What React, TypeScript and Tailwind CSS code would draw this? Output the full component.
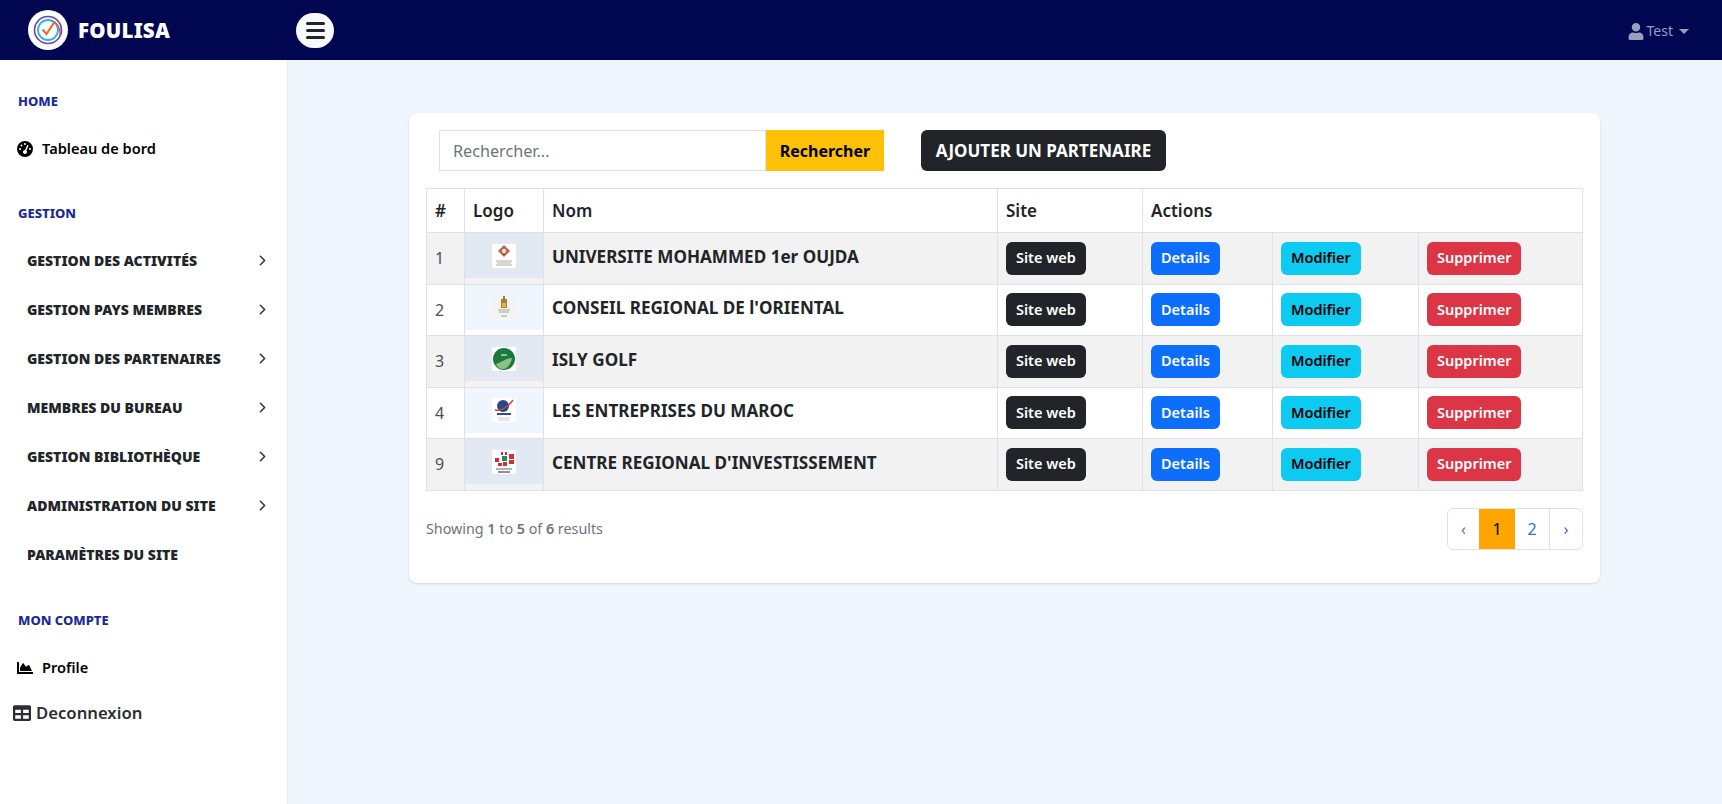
import { ChevronRight } from "lucide-react";
import { FaChartArea, FaTable, FaUser } from "react-icons/fa";
import { FaGaugeHigh } from "react-icons/fa6";

const menu = [
  { label: "GESTION DES ACTIVITÉS", arrow: true },
  { label: "GESTION PAYS MEMBRES", arrow: true },
  { label: "GESTION DES PARTENAIRES", arrow: true },
  { label: "MEMBRES DU BUREAU", arrow: true },
  { label: "GESTION BIBLIOTHÈQUE", arrow: true },
  { label: "ADMINISTRATION DU SITE", arrow: true },
  { label: "PARAMÈTRES DU SITE", arrow: false },
];

function BrandLogo() {
  return (
    <svg viewBox="0 0 40 40" className="w-10 h-10">
      <circle cx="20" cy="20" r="20" fill="#fff" />
      <circle cx="20" cy="20" r="13.5" fill="none" stroke="#6a3fb5" strokeWidth="1.6" />
      <circle cx="20" cy="20" r="10" fill="none" stroke="#27b6e6" strokeWidth="1.8" />
      <path d="M14.5 19.5l4 4.5 8-12" fill="none" stroke="#ee6a2c" strokeWidth="2.2" />
      <path d="M26.5 11.5c4 4 7 9 5 15" fill="none" stroke="#e2553d" strokeWidth="1.4" />
    </svg>
  );
}

// petits logos des partenaires
function PartnerLogo({ id }: { id: number }) {
  if (id === 1)
    return (
      <svg viewBox="0 0 24 24" className="w-6 h-6 bg-white">
        <path d="M12 1l6 6-6 6-6-6z" fill="#b5654d" />
        <circle cx="12" cy="7" r="2.2" fill="#f1ddd0" />
        <path d="M4 17h16M5 19h14M4 21h16" stroke="#a9a29c" strokeWidth="0.9" />
      </svg>
    );
  if (id === 2)
    return (
      <svg viewBox="0 0 24 24" className="w-6 h-6 bg-[#f3f3f1]">
        <path d="M9 4h6v9H9z" fill="#a8842f" />
        <path d="M11 1h2v4h-2z" fill="#7d8a3a" />
        <path d="M10 8h4v4h-4z" fill="#d9b84a" />
        <path d="M6 15h12M7 17h10M9 21h6" stroke="#9a9a92" strokeWidth="0.9" />
      </svg>
    );
  if (id === 3)
    return (
      <svg viewBox="0 0 24 24" className="w-6 h-6 bg-white">
        <circle cx="12" cy="12" r="11" fill="#1c7a3c" />
        <path d="M4 17c5-1 8-5 16-6-1 6-5 11-9 11-3 0-6-2-7-5z" fill="#8cc08a" />
        <path d="M9 8h6" stroke="#e4f0e2" strokeWidth="1.2" />
      </svg>
    );
  if (id === 4)
    return (
      <svg viewBox="0 0 24 24" className="w-6 h-6 bg-white">
        <circle cx="11" cy="8" r="6" fill="#274a86" />
        <path d="M3 12c6 1 12-2 18-10" fill="none" stroke="#c8433a" strokeWidth="1.4" />
        <path d="M5 16h14" stroke="#2d4e86" strokeWidth="2" />
        <path d="M6 20h12M7 22h10" stroke="#b8bcc4" strokeWidth="0.8" />
      </svg>
    );
  return (
    <svg viewBox="0 0 24 24" className="w-6 h-6 bg-white">
      <path d="M3 8h4v4H3zM9 2h2v3H9zM13 2h2v3h-2zM17 4h5v5h-5zM17 10h5v4h-5zM6 13h4v3H6z" fill="#d62b3c" />
      <path d="M10 6h5v5h-5z" fill="#2a8a4a" />
      <path d="M11 12h4v4h-4z" fill="#d62b3c" />
      <path d="M4 19h16" stroke="#666" strokeWidth="1" />
      <path d="M6 22h12" stroke="#222" strokeWidth="1" />
    </svg>
  );
}

const rows = [
  { n: 1, nom: "UNIVERSITE MOHAMMED 1er OUJDA" },
  { n: 2, nom: "CONSEIL REGIONAL DE l'ORIENTAL" },
  { n: 3, nom: "ISLY GOLF" },
  { n: 4, nom: "LES ENTREPRISES DU MAROC" },
  { n: 9, nom: "CENTRE REGIONAL D'INVESTISSEMENT" },
];

export default function App() {
  return (
    <div className="min-h-[804px] h-[804px] overflow-hidden flex flex-col bg-[#eff6fe] font-['Noto_Sans',sans-serif] text-[#212529]">
      {/* navbar */}
      <header className="h-[60px] shrink-0 bg-[#000650] flex items-center">
        <div className="w-[296px] pl-7 flex items-center gap-[10px]">
          <BrandLogo />
          <span className="text-white text-[20.5px] font-black tracking-[0.2px]">FOULISA</span>
        </div>
        <button className="w-[38px] h-[35px] rounded-full bg-[#f8f9fa] flex flex-col items-center justify-center gap-[4px]">
          <span className="w-[19px] h-[3px] bg-[#212529] rounded-sm" />
          <span className="w-[19px] h-[3px] bg-[#212529] rounded-sm" />
          <span className="w-[19px] h-[3px] bg-[#212529] rounded-sm" />
        </button>
        <div className="ml-auto mr-[33px] mt-[2px] flex items-center text-[#9b9dbd] text-sm">
          <FaUser className="w-4 h-[17px] mr-[3px]" />
          <span>Test</span>
          <span className="ml-[6px] w-0 h-0 border-x-[5px] border-x-transparent border-t-[5px] border-t-[#9b9dbd]" />
        </div>
      </header>

      <div className="flex flex-1 min-h-0">
        {/* sidebar */}
        <aside className="w-[288px] shrink-0 bg-white border-r border-[#e6edf6] pt-[30px]">
          <div className="h-6 pl-[18px] flex items-center text-[13px] font-extrabold text-[#1b2a9a]">HOME</div>
          <div className="mt-[11px] h-12 pl-[17px] flex items-center text-black text-[14.6px] font-semibold">
            <FaGaugeHigh className="w-4 h-4 mr-[9px]" />
            Tableau de bord
          </div>
          <div className="mt-[29px] h-6 pl-[18px] flex items-center text-[13px] font-extrabold text-[#1b2a9a]">GESTION</div>
          <ul className="mt-[10px]">
            {menu.map((item) => (
              <li key={item.label} className="h-[49px] pl-[27px] pr-[16px] flex items-center justify-between text-[14px] font-black text-[#212529]">
                <span>{item.label}</span>
                {item.arrow && <ChevronRight className="w-[17px] h-[17px] text-[#333]" strokeWidth={2.2} />}
              </li>
            ))}
          </ul>
          <div className="mt-[30px] h-6 pl-[18px] flex items-center text-[13px] font-extrabold text-[#1b2a9a]">MON COMPTE</div>
          <div className="mt-[11px] h-12 pl-[17px] flex items-center text-black text-[14.6px] font-semibold">
            <FaChartArea className="w-4 h-4 mr-[9px]" />
            Profile
          </div>
          <div className="h-[42px] pl-[13px] flex items-center text-[16.7px] font-semibold text-[#2b2f33]">
            <FaTable className="w-[18px] h-[18px] mr-[5px]" />
            Deconnexion
          </div>
        </aside>

        {/* contenu */}
        <main className="flex-1 pl-[121px] pr-[122px] pt-[53px]">
          <section className="h-[470px] bg-white rounded-lg shadow-sm px-[17px] pt-[17px]">
            <div className="flex items-center pl-[13px] h-[41px]">
              <div className="flex h-[41px] w-[445px]">
                <input
                  readOnly
                  placeholder="Rechercher..."
                  className="w-[327px] h-full border border-[#dee2e6] pl-[13px] text-[16.2px] placeholder:text-[#6c757d] bg-white outline-none"
                />
                <button className="flex-1 bg-[#ffc107] text-black font-bold text-[16px]">Rechercher</button>
              </div>
              <button className="ml-[37px] h-[41px] w-[245px] bg-[#212529] text-white font-bold text-[17px] rounded-md">
                AJOUTER UN PARTENAIRE
              </button>
            </div>

            <table className="mt-[17px] w-[1156px] table-fixed border-collapse border border-[#dee2e6] text-[16px]">
              <colgroup>
                <col className="w-[38px]" />
                <col className="w-[79px]" />
                <col className="w-[454px]" />
                <col className="w-[145px]" />
                <col className="w-[130px]" />
                <col className="w-[146px]" />
                <col className="w-[164px]" />
              </colgroup>
              <thead>
                <tr className="h-[44px] text-left text-[17px]">
                  <th className="border border-[#dee2e6] px-2 font-semibold">#</th>
                  <th className="border border-[#dee2e6] px-2 font-semibold">Logo</th>
                  <th className="border border-[#dee2e6] px-2 font-semibold">Nom</th>
                  <th className="border border-[#dee2e6] px-2 font-semibold">Site</th>
                  <th colSpan={3} className="border border-[#dee2e6] px-2 font-semibold">Actions</th>
                </tr>
              </thead>
              <tbody>
                {rows.map((r, i) => (
                  <tr key={r.n} className={i % 2 === 0 ? "h-[51.5px] bg-[#f2f2f2]" : "h-[51.5px] bg-white"}>
                    <td className="border border-[#dee2e6] px-2 text-[#495057]">{r.n}</td>
                    <td className="border border-[#dee2e6] p-0 align-top">
                      <div className={i % 2 === 0 ? "h-[45px] bg-[#e2e9f2] flex items-center justify-center" : "h-[45px] bg-[#eff6fe] flex items-center justify-center"}>
                        <PartnerLogo id={r.n} />
                      </div>
                    </td>
                    <td className="border border-[#dee2e6] px-2 font-bold text-[17.1px] pb-[3px]">{r.nom}</td>
                    <td className="border border-[#dee2e6] px-2">
                      <span className="inline-flex items-center h-[33px] px-[10px] rounded-md bg-[#212529] text-white text-[14.5px] font-semibold">Site web</span>
                    </td>
                    <td className="border border-[#dee2e6] px-2">
                      <span className="inline-flex items-center h-[33px] px-[10px] rounded-md bg-[#0d6efd] text-white text-[14.5px] font-semibold">Details</span>
                    </td>
                    <td className="border border-[#dee2e6] px-2">
                      <span className="inline-flex items-center h-[33px] px-[10px] rounded-md bg-[#0dcaf0] text-black text-[14.5px] font-semibold">Modifier</span>
                    </td>
                    <td className="border border-[#dee2e6] px-2">
                      <span className="inline-flex items-center h-[33px] px-[10px] rounded-md bg-[#dc3545] text-white text-[14.5px] font-semibold">Supprimer</span>
                    </td>
                  </tr>
                ))}
              </tbody>
            </table>

            <div className="mt-[17px] flex items-center justify-between">
              <p className="text-[14.3px] text-[#6c757d]">
                Showing <span className="font-semibold">1</span> to <span className="font-semibold">5</span> of <span className="font-semibold">6</span> results
              </p>
              <div className="flex h-[42px] w-[136px] border border-[#dee2e6] rounded-md text-[16px] overflow-hidden">
                <span className="w-[31px] flex items-center justify-center text-[#6c757d]">‹</span>
                <span className="w-[36px] -my-px bg-[#ffa500] flex items-center justify-center text-black">1</span>
                <span className="w-[35px] flex items-center justify-center text-[#2f6fc9] border-r border-[#dee2e6]">2</span>
                <span className="flex-1 flex items-center justify-center text-[#2f6fc9]">›</span>
              </div>
            </div>
          </section>
        </main>
      </div>
    </div>
  );
}
